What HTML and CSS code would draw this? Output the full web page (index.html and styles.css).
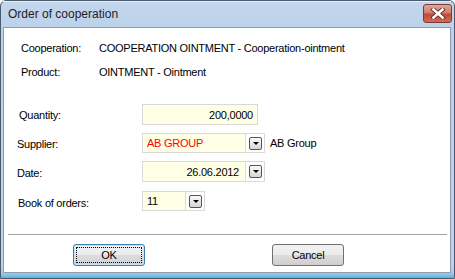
FILE: index.html
```html
<!DOCTYPE html>
<html lang="en">
<head>
    <meta charset="UTF-8">
    <title>Order of cooperation</title>
    <link rel="stylesheet" href="styles.css">
</head>
<body>
    <div class="window">
        <div class="titlebar">
            <span class="title">Order of cooperation</span>
            <div class="close">
                <svg width="16" height="11" viewBox="0 0 16 11">
                    <path d="M3.5 1.5 L12.5 9.5 M12.5 1.5 L3.5 9.5" stroke="#6a2e2a" stroke-width="4.4" stroke-linecap="square"/>
                    <path d="M3.5 1.5 L12.5 9.5 M12.5 1.5 L3.5 9.5" stroke="#fff" stroke-width="2.6" stroke-linecap="square"/>
                </svg>
            </div>
        </div>
        <div class="client">
            <div class="info">
                <div class="info-row"><span class="info-label">Cooperation:</span><span>COOPERATION OINTMENT - Cooperation-ointment</span></div>
                <div class="info-row"><span class="info-label">Product:</span><span>OINTMENT - Ointment</span></div>
            </div>

            <div class="form">
                <div class="row row-qty">
                    <label class="lbl lbl-qty">Quantity:</label>
                    <div class="field field-qty">200,0000</div>
                </div>
                <div class="row row-sup">
                    <label class="lbl">Supplier:</label>
                    <div class="combo">
                        <div class="field field-sup">AB GROUP</div>
                        <div class="drop"><span class="drop-btn"></span></div>
                    </div>
                    <span class="extra">AB Group</span>
                </div>
                <div class="row row-date">
                    <label class="lbl">Date:</label>
                    <div class="combo">
                        <div class="field field-date">26.06.2012</div>
                        <div class="drop"><span class="drop-btn"></span></div>
                    </div>
                </div>
                <div class="row row-book">
                    <label class="lbl lbl-book">Book of orders:</label>
                    <div class="combo">
                        <div class="field field-book">11</div>
                        <div class="drop"><span class="drop-btn"></span></div>
                    </div>
                </div>
            </div>

            <div class="sep"></div>

            <div class="buttons">
                <button class="btn btn-ok"><span class="focus">OK</span></button>
                <button class="btn btn-cancel">Cancel</button>
            </div>
        </div>
    </div>
</body>
</html>
```

FILE: styles.css
```css
body { margin: 0; font-family: "Liberation Sans", Arial, sans-serif; font-size: 11px; color: #000; background: #fff; }
.window { width: 455px; height: 279px; box-sizing: border-box; border: 1px solid #4b5a6c; border-radius: 6px 6px 0 0; padding: 0 3px 5px 2px; display: flex; flex-direction: column; background: linear-gradient(to bottom, #c2d6ec 0, #bcd2ea 30px, #bed3ea 265px, #a8c6e4 272px, #62bde9 276px, #55a6d6 277px); }
.titlebar { height: 26px; display: flex; align-items: flex-start; justify-content: space-between; box-shadow: inset 0 1px 0 #e6eef8; }
.title { font-size: 12px; margin: 6px 0 0 5px; color: #1e1e1e; }
.close { width: 27px; height: 17px; margin: 3px -1px 0 0; border: 1px solid #7a3a38; border-radius: 3px; display: flex; align-items: center; justify-content: center; background: linear-gradient(to bottom, #e3a696 0, #d17f6c 45%, #bf4c38 55%, #d46a52 100%); }
.client { flex: 1; background: #fff; border: 1px solid #8f9cab; display: flex; flex-direction: column; letter-spacing: -0.25px; }
.info { padding: 8px 0 0 17px; }
.info-row { display: flex; height: 24px; align-items: center; }
.info-label { width: 78px; }
.form { margin-top: 20px; padding-left: 13px; }
.row { display: flex; align-items: center; }
.row-qty { height: 21px; }
.row-sup { height: 20px; margin-top: 8px; }
.row-date { height: 21px; margin-top: 8px; }
.row-book { height: 20px; margin-top: 9px; }
.lbl { width: 125px; padding-top: 2px; }
.lbl-qty { padding-left: 2px; width: 123px; padding-top: 0; }
.lbl-book { padding-left: 1px; width: 124px; padding-top: 3px; }
.field { box-sizing: border-box; height: 100%; background: #ffffe6; display: flex; align-items: center; padding: 0 4px; }
.field-qty { width: 116px; border: 1px solid #d9d9d9; justify-content: flex-end; }
.combo { display: flex; height: 100%; box-sizing: border-box; border: 1px solid #d9d9d9; background: #fff; }
.combo .field { border-right: 1px solid #dedede; }
.field-sup { width: 103px; color: #f00; }
.field-date { width: 103px; justify-content: flex-end; padding-right: 6px; }
.field-book { width: 43px; }
.drop { width: 18px; display: flex; align-items: center; justify-content: center; }
.drop-btn { width: 11px; height: 11px; border: 1px solid #555; border-radius: 2px; background: linear-gradient(to bottom, #fafafa, #d6d6d6); position: relative; }
.drop-btn::after { content: ""; position: absolute; left: 3px; top: 4px; border-left: 3px solid transparent; border-right: 3px solid transparent; border-top: 3px solid #000; }
.extra { margin-left: 5px; }
.sep { margin: 23px 3px 0 4px; border-top: 1px solid #a0a0a0; }
.buttons { display: flex; margin-top: 9px; padding-left: 69px; }
.btn { font: inherit; font-size: 11px; letter-spacing: -0.25px; width: 72px; height: 22px; border-radius: 3px; padding: 0; color: #000; background: linear-gradient(to bottom, #f2f2f2 0, #ebebeb 50%, #dddddd 50%, #cfcfcf 100%); }
.btn-cancel { border: 1px solid #707070; margin-left: 127px; }
.btn-ok { border: 1px solid #3c7fb1; box-shadow: inset 0 0 0 1px #c4e3f7; padding: 2px; }
.focus { display: flex; align-items: center; justify-content: center; height: 100%; box-sizing: border-box; border: 1px dotted #000; }
```
